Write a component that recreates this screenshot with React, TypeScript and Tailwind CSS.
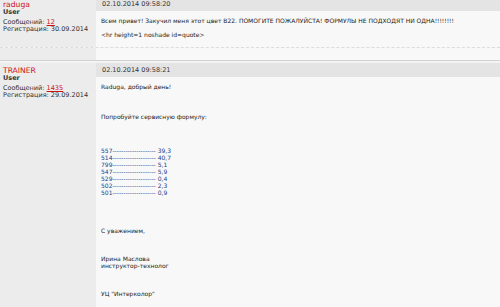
const font = "font-['DejaVu_Sans',Verdana,sans-serif]";

interface Author {
  name: string;
  posts: string;
  reg: string;
}

function AuthorCell({ a }: { a: Author }) {
  return (
    <div className="w-[96px] shrink-0 bg-[#ececec] px-[3px] pt-[4px] text-[6.5px] text-[#333]">
      <div className="text-[7.6px] leading-[8px] text-[#cc1111]">{a.name}</div>
      <div className="font-bold leading-[7px]">User</div>
      <div className="mt-[3px] leading-[7px]">
        Сообщений: <span className="text-[#cc1111] underline">{a.posts}</span>
      </div>
      <div className="leading-[7px]">Регистрация: {a.reg}</div>
    </div>
  );
}

function DateBar({ date }: { date: string }) {
  return (
    <div className="h-[14px] bg-[#e4e4e4] px-[6px] pt-[1px] text-[6.5px] leading-[13px] text-[#333]">
      {date}
    </div>
  );
}

const rates = [
  ["557", "39,3"],
  ["514", "40,7"],
  ["799", "5,1"],
  ["547", "5,9"],
  ["529", "0,4"],
  ["502", "2,3"],
  ["501", "0,9"],
];

export default function App() {
  return (
    <div className={`${font} h-[307px] w-[500px] overflow-hidden bg-[#f7f7f7]`}>
      <div className="-mt-[3px]">
        {/* first post */}
        <div className="flex h-[51px] border-b border-dashed border-[#dcdcdc]">
          <AuthorCell a={{ name: "raduga", posts: "12", reg: "30.09.2014" }} />
          <div className="flex-1 bg-[#f8f8f8]">
            <DateBar date="02.10.2014 09:58:20" />
            <div className="px-[5px] pt-[6px] text-[6px] leading-[7px] text-[#222]">
              <p>
                Всем привет! Закучил меня этот цвет B22. ПОМОГИТЕ ПОЖАЛУЙСТА! ФОРМУЛЫ НЕ ПОДХОДЯТ НИ
                ОДНА!!!!!!!!
              </p>
              <p className="mt-[7px]">{"<hr height=1 noshade id=quote>"}</p>
            </div>
          </div>
        </div>
        <div className="flex h-[12px]">
          <div className="w-[96px] bg-[#ececec]" />
          <div className="flex-1 bg-[#f8f8f8]" />
        </div>
        <div className="h-[1px] bg-[#d2d2d2]" />
        <div className="h-[2px] bg-[#f4f4f4]" />

        {/* second post */}
        <div className="flex h-[260px]">
          <AuthorCell a={{ name: "TRAINER", posts: "1435", reg: "29.09.2014" }} />
          <div className="flex-1 bg-[#f8f8f8]">
            <DateBar date="02.10.2014 09:58:21" />
            <div className="px-[5px] pt-[6px] text-[6px] leading-[7px] text-[#222]">
              <p>Raduga, добрый день!</p>
              <p className="mt-[23px]">Попробуйте сервисную формулу:</p>
              <div className="mt-[27px] text-[#22418a]">
                {rates.map(([k, v]) => (
                  <div key={k}>
                    {k}-------------------- {v}
                  </div>
                ))}
              </div>
              <p className="mt-[31px]">С уважением,</p>
              <p className="mt-[21px]">Ирина Маслова</p>
              <p>инструктор-технолог</p>
              <p className="mt-[21px]">УЦ "Интерколор"</p>
            </div>
          </div>
        </div>
      </div>
    </div>
  );
}
